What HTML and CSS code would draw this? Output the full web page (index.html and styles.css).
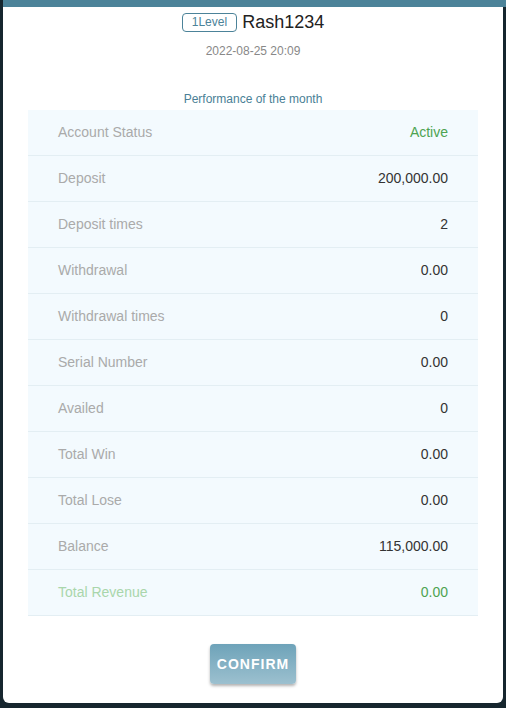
FILE: index.html
```html
<!DOCTYPE html>
<html>
<head>
<meta charset="utf-8">
<link rel="stylesheet" href="styles.css">
</head>
<body>
<div class="modal">
  <div class="topbar"></div>
  <div class="head">
    <span class="badge">1Level</span>
    <span class="name">Rash1234</span>
  </div>
  <div class="date">2022-08-25 20:09</div>
  <div class="caption">Performance of the month</div>
  <div class="table">
    <div class="row"><span class="label">Account Status</span><span class="value green">Active</span></div>
    <div class="row"><span class="label">Deposit</span><span class="value">200,000.00</span></div>
    <div class="row"><span class="label">Deposit times</span><span class="value">2</span></div>
    <div class="row"><span class="label">Withdrawal</span><span class="value">0.00</span></div>
    <div class="row"><span class="label">Withdrawal times</span><span class="value">0</span></div>
    <div class="row"><span class="label">Serial Number</span><span class="value">0.00</span></div>
    <div class="row"><span class="label">Availed</span><span class="value">0</span></div>
    <div class="row"><span class="label">Total Win</span><span class="value">0.00</span></div>
    <div class="row"><span class="label">Total Lose</span><span class="value">0.00</span></div>
    <div class="row"><span class="label">Balance</span><span class="value">115,000.00</span></div>
    <div class="row"><span class="label light-green">Total Revenue</span><span class="value green">0.00</span></div>
  </div>
  <div class="actions">
    <button class="confirm">CONFIRM</button>
  </div>
</div>
</body>
</html>
```
FILE: styles.css
```css
html, body {
  margin: 0;
  padding: 0;
  height: 708px;
  overflow: hidden;
  background: #16262e;
  font-family: "Liberation Sans", Arial, sans-serif;
}
.modal {
  margin: 0 3px;
  width: 500px;
  height: 703px;
  background: #ffffff;
  border-radius: 0 0 6px 6px;
  display: flex;
  flex-direction: column;
  align-items: center;
}
.topbar {
  align-self: stretch;
  height: 7px;
  margin-right: -3px;
  background: #4c8399;
}
.head {
  margin-top: 5px;
  display: flex;
  align-items: center;
  gap: 5px;
  height: 20px;
}
.badge {
  display: inline-block;
  box-sizing: border-box;
  height: 19px;
  line-height: 17px;
  padding: 0 9px;
  border: 1px solid #4c8399;
  border-radius: 4px;
  color: #4c8399;
  font-size: 12px;
}
.name {
  font-size: 18px;
  color: #222;
  line-height: 20px;
}
.date {
  margin-top: 12px;
  font-size: 12px;
  color: #888;
  line-height: 14px;
}
.caption {
  margin-top: 34px;
  font-size: 12px;
  color: #4a7f96;
  line-height: 14px;
}
.table {
  margin-top: 4px;
  width: 450px;
  background: #f3fafe;
}
.row {
  box-sizing: border-box;
  height: 46px;
  border-bottom: 1px solid #e3eef3;
  display: flex;
  align-items: center;
  justify-content: space-between;
  padding: 0 30px 2px;
  font-size: 14px;
}
.label {
  color: #aaa;
}
.value {
  color: #333;
}
.green {
  color: #4da351;
}
.light-green {
  color: #a9d6ab;
}
.actions {
  margin-top: 28px;
}
.confirm {
  width: 86px;
  height: 40px;
  border: none;
  border-radius: 4px;
  background: linear-gradient(to bottom, #6ea3b9, #9cc0cf);
  color: #fff;
  font-family: "Liberation Sans", Arial, sans-serif;
  font-weight: bold;
  font-size: 14px;
  letter-spacing: 1px;
  box-shadow: 0 2px 3px rgba(0, 0, 0, 0.3);
  padding: 0;
}
```
